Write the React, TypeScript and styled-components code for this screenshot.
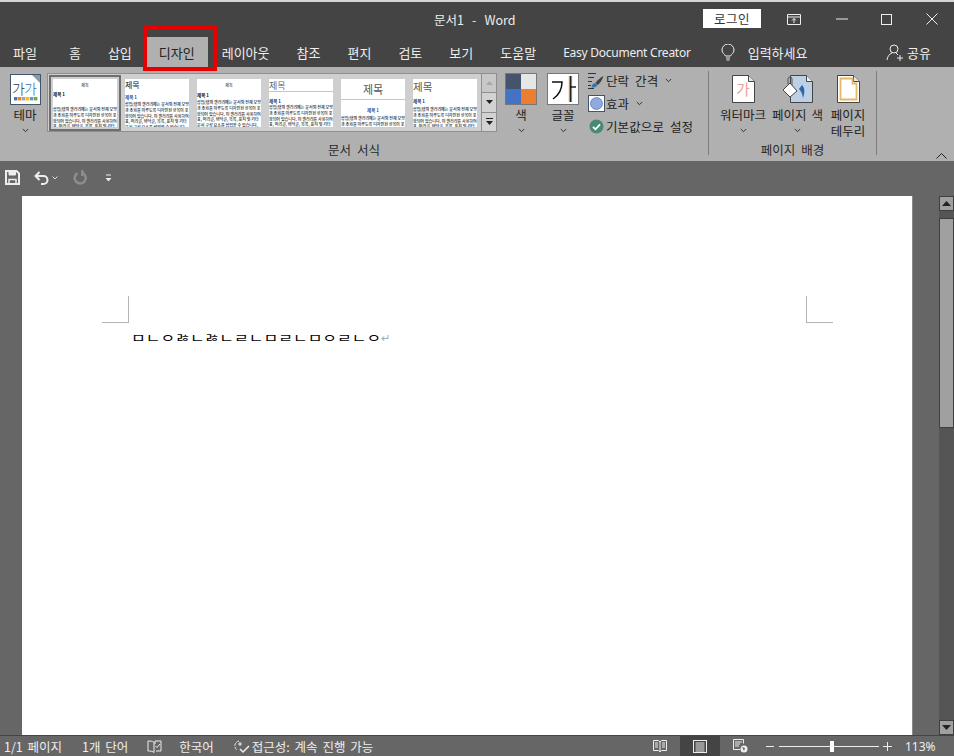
import React from 'react';
import styled, { createGlobalStyle } from 'styled-components';

const GlobalStyle = createGlobalStyle`
  html, body {
    margin: 0;
    padding: 0;
    background: #666;
    overflow: hidden;
  }
  * {
    box-sizing: border-box;
  }
`;

const Window = styled.div`
  position: relative;
  width: 954px;
  height: 756px;
  display: flex;
  flex-direction: column;
  overflow: hidden;
  font-family: 'Noto Sans CJK KR', 'Noto Sans', sans-serif;
  font-size: 12.5px;
  color: #222;
  background: #666;
  border-top: 2px solid #d4d4d4;
`;

const TitleBar = styled.div`
  height: 34px;
  flex: none;
  display: flex;
  align-items: center;
  background: #444;
  color: #eee;
  padding-left: 434px;
`;

const TitleText = styled.div`
  font-size: 12.5px;
  white-space: pre;
  word-spacing: 1.25px;
  font-family: 'Noto Sans CJK KR', 'Noto Sans', sans-serif;
`;

const TitleControls = styled.div`
  margin-left: auto;
  display: flex;
  align-items: center;
`;

const LoginButton = styled.button`
  width: 58px;
  height: 19px;
  margin-top: -1px;
  margin-right: 10px;
  padding: 0;
  border: none;
  background: #fff;
  color: #333;
  font: inherit;
  font-size: 12.5px;
  line-height: 19px;
  letter-spacing: 0.5px;
`;

const WindowButton = styled.div<{ $after?: number }>`
  width: 45px;
  height: 30px;
  margin-right: ${p => p.$after ?? 0}px;
  display: flex;
  align-items: center;
  justify-content: center;
`;

const TabRow = styled.div`
  height: 31px;
  flex: none;
  display: flex;
  align-items: stretch;
  gap: 1px;
  background: #444;
  color: #eee;
  font-size: 13px;
  padding-top: 1px;
`;

const Tab = styled.div<{ $active?: boolean; $first?: boolean }>`
  display: flex;
  align-items: center;
  padding: 0 ${p => (p.$first ? '18px' : '13px')} 0 13px;
  white-space: nowrap;
  background: ${p => (p.$active ? '#b0b0b0' : 'transparent')};
  color: ${p => (p.$active ? '#222' : '#eee')};
`;

const LatinTab = styled(Tab)`
  font-family: 'Noto Sans', sans-serif;
  font-size: 12px;
  letter-spacing: -0.25px;
`;

const Bulb = styled.div`
  display: flex;
  align-items: center;
  margin-left: 16px;
  gap: 13px;
`;

const ShareButton = styled.div`
  margin-left: auto;
  padding-right: 23px;
  display: flex;
  align-items: center;
  gap: 3px;
`;

const Highlight = styled.div`
  position: absolute;
  left: 143px;
  top: 23px;
  width: 74px;
  height: 46px;
  border: 4px solid #e60000;
  pointer-events: none;
`;

const Ribbon = styled.div`
  height: 94px;
  flex: none;
  display: flex;
  background: #b0b0b0;
  padding-top: 4px;
`;

const Group = styled.div<{ $width: number }>`
  width: ${p => p.$width}px;
  height: 84px;
  flex: none;
  display: flex;
  flex-direction: column;
  border-right: 1px solid #7c7c7c;
`;

const GroupBody = styled.div<{ $left: number }>`
  height: 67px;
  flex: none;
  display: flex;
  align-items: flex-start;
  padding: 2px 0 0 ${p => p.$left}px;
`;

const GroupLabel = styled.div`
  height: 17px;
  line-height: 24px;
  text-align: center;
  word-spacing: 3px;
  color: #2a2a2a;
`;

const CollapseSlot = styled.div`
  flex: 1;
  height: 90px;
  display: flex;
  align-items: flex-end;
  justify-content: flex-end;
  padding: 0 7px 2px 0;
`;

const LargeButton = styled.div<{ $width: number; $after?: number }>`
  width: ${p => p.$width}px;
  margin-right: ${p => p.$after ?? 0}px;
  flex: none;
  display: flex;
  flex-direction: column;
  align-items: center;
`;

const IconSlot = styled.div`
  height: 32px;
  display: flex;
  align-items: center;
  justify-content: center;
`;

const ButtonLabel = styled.div`
  margin-top: 2px;
  line-height: 16px;
  text-align: center;
  white-space: nowrap;
  word-spacing: 2px;
`;

const Caret = styled.div`
  height: 14px;
  display: flex;
  align-items: center;
  justify-content: center;
`;

const Gallery = styled.div`
  width: 450px;
  height: 59px;
  flex: none;
  margin: 0 8px 0 5px;
  display: flex;
  background: #cfcfcf;
  border: 1px solid #8f8f8f;
`;

const ThumbStrip = styled.div`
  flex: 1;
  display: flex;
  gap: 8px;
  padding: 5px 0 0 5px;
`;

const Thumb = styled.div<{ $selected?: boolean }>`
  width: 64px;
  height: 48px;
  flex: none;
  overflow: hidden;
  background: #fff;
  color: #111;
  ${p => (p.$selected ? 'outline: 2px solid #6e6e6e; outline-offset: 2px;' : '')}
`;

const ThumbTitle = styled.div<{ $size: number; $center?: boolean; $color?: string; $rule?: boolean; $height: number }>`
  height: ${p => p.$height}px;
  font-size: ${p => p.$size}px;
  line-height: ${p => p.$height}px;
  text-align: ${p => (p.$center ? 'center' : 'left')};
  color: ${p => p.$color ?? '#111'};
  ${p => (p.$rule ? 'border-bottom: 1px solid #b9c8e2;' : '')}
`;

const ThumbHeading = styled.div<{ $center?: boolean; $color?: string; $top: number }>`
  margin-top: ${p => p.$top}px;
  font-size: 4.5px;
  line-height: 7px;
  font-weight: 700;
  text-align: ${p => (p.$center ? 'center' : 'left')};
  color: ${p => p.$color ?? '#111'};
`;

const ThumbBody = styled.div<{ $top: number }>`
  margin-top: ${p => p.$top}px;
  font-size: 4px;
  line-height: 5.8px;
  font-weight: 500;
  color: #111;
`;

const ScrollColumn = styled.div`
  width: 15px;
  flex: none;
  display: flex;
  flex-direction: column;
  border-left: 1px solid #8f8f8f;
`;

const GalleryArrow = styled.div<{ $disabled?: boolean }>`
  flex: 1;
  display: flex;
  align-items: center;
  justify-content: center;
  background: ${p => (p.$disabled ? '#c8c8c8' : '#d2d2d2')};
  & + & {
    border-top: 1px solid #8f8f8f;
  }
`;

const OptionColumn = styled.div`
  margin: -3px 0 0 8px;
  display: flex;
  flex-direction: column;
  gap: 2px;
`;

const OptionRow = styled.div`
  height: 21px;
  display: flex;
  align-items: center;
  gap: 1px;
  white-space: nowrap;
  word-spacing: 3px;
  letter-spacing: 0.1px;
`;

const OptionCaret = styled.span`
  display: flex;
  margin-left: 6px;
`;

const OptionIcon = styled.div`
  width: 18px;
  display: flex;
  justify-content: center;
`;

const QuickAccess = styled.div`
  height: 35px;
  flex: none;
  display: flex;
  align-items: center;
  background: #666;
  padding: 0 0 2px 5px;
  gap: 14px;
`;

const QuickGroup = styled.div<{ $left?: number }>`
  display: flex;
  align-items: center;
  gap: 3px;
  margin-left: ${p => p.$left ?? 0}px;
`;

const Workspace = styled.div`
  flex: 1;
  min-height: 0;
  display: flex;
  background: #666;
`;

const PageArea = styled.div`
  flex: 1;
  padding-left: 22px;
`;

const Page = styled.div`
  width: 891px;
  height: 100%;
  background: #fff;
  border-right: 1px solid #8a8a8a;
  padding: 100px 79px 0 80px;
`;

const MarginMarks = styled.div`
  display: flex;
  justify-content: space-between;
`;

const MarginMark = styled.div<{ $side: 'left' | 'right' }>`
  width: 27px;
  height: 27px;
  border-bottom: 1px solid #b4b4b4;
  ${p => `border-${p.$side === 'left' ? 'right' : 'left'}: 1px solid #b4b4b4;`}
`;

const BodyLine = styled.div`
  display: flex;
  align-items: center;
  height: 20px;
  margin-top: 5px;
  padding-left: 29px;
`;

const JamoText = styled.span`
  display: inline-block;
  font-size: 16px;
  line-height: 20px;
  color: #000;
  white-space: nowrap;
  transform: scaleY(0.78);
`;

const ReturnMark = styled.span`
  font-family: 'DejaVu Sans', sans-serif;
  font-size: 11px;
  color: #a8a8a8;
`;

const ScrollBar = styled.div`
  width: 15px;
  flex: none;
  display: flex;
  flex-direction: column;
  background: #555;
`;

const ScrollArrow = styled.div`
  height: 15px;
  flex: none;
  display: flex;
  align-items: center;
  justify-content: center;
  background: #a0a0a0;
  border: 1px solid #3f3f3f;
`;

const ScrollThumb = styled.div`
  height: 210px;
  margin-top: 7px;
  flex: none;
  background: #a0a0a0;
  border: 1px solid #3f3f3f;
`;

const ScrollSpacer = styled.div`
  flex: 1;
`;

const StatusBar = styled.div`
  height: 21px;
  flex: none;
  display: flex;
  align-items: stretch;
  background: #666;
  border-top: 1px solid #444;
  color: #eee;
  word-spacing: 2px;
  padding-left: 4px;
`;

const StatusItem = styled.div<{ $after: number }>`
  display: flex;
  align-items: center;
  gap: 2px;
  margin-right: ${p => p.$after}px;
  white-space: nowrap;
`;

const StatusRight = styled.div`
  margin-left: auto;
  display: flex;
  align-items: stretch;
  padding-right: 18px;
`;

const ViewButton = styled.div<{ $active?: boolean }>`
  width: 40px;
  display: flex;
  align-items: center;
  justify-content: center;
  background: ${p => (p.$active ? '#444' : 'transparent')};
`;

const ZoomControl = styled.div`
  display: flex;
  align-items: center;
  gap: 4px;
  margin-left: 6px;
`;

const ZoomTrack = styled.div`
  position: relative;
  width: 100px;
  height: 1px;
  background: #eee;
`;

const ZoomThumb = styled.div`
  position: absolute;
  left: 51px;
  top: -5px;
  width: 4px;
  height: 11px;
  background: #fff;
`;

const ZoomValue = styled.div`
  width: 31px;
  margin-left: 13px;
  display: flex;
  align-items: center;
  font-family: 'Noto Sans', sans-serif;
  font-size: 12px;
  word-spacing: 0;
`;

const SmallChevron = () => (
  <svg width="7" height="5" viewBox="0 0 7 5">
    <path d="M.8 1l2.7 2.7L6.2 1" fill="none" stroke="#333" strokeWidth="1" />
  </svg>
);

const PageShape = ({ children }: { children?: React.ReactNode }) => (
  <>
    <path d="M.5.5h16l6 6v21H.5z" fill="#fff" stroke="#444" />
    <path d="M16.5.5v6h6" fill="#e4e4e4" stroke="#444" />
    {children}
  </>
);

const ThemeIcon = () => (
  <svg width="31" height="31" viewBox="0 0 31 31">
    <rect x=".5" y=".5" width="30" height="30" fill="#fff" stroke="#44546a" />
    <path d="M22 1h8v8z" fill="#8a9bb0" />
    <text x="2" y="20" fontSize="14" fontWeight="300" fill="#333" fontFamily="Noto Sans CJK KR">가</text>
    <text x="14" y="20" fontSize="14" fontWeight="300" fill="#3d6fb5" fontFamily="Noto Sans CJK KR">가</text>
    {['#4472c4', '#ed7d31', '#a5a5a5', '#ffc000', '#5b9bd5', '#70ad47'].map((c, i) => (
      <rect key={c} x={4 + i * 4} y="23" width="3.4" height="3.4" fill={c} />
    ))}
  </svg>
);

const ColorSwatch = () => (
  <svg width="32" height="32" viewBox="0 0 32 32">
    <rect width="16" height="16" fill="#44546a" />
    <rect x="16" width="16" height="16" fill="#e7e6e6" />
    <rect y="16" width="16" height="16" fill="#4472c4" />
    <rect x="16" y="16" width="16" height="16" fill="#ed7d31" />
    <rect x=".5" y=".5" width="31" height="31" fill="none" stroke="#777" />
  </svg>
);

const FontSwatch = () => (
  <svg width="32" height="32" viewBox="0 0 32 32">
    <rect x=".5" y=".5" width="31" height="31" fill="#fff" stroke="#777" />
    <path d="M5 9h10c0 8-3 13-9 17" fill="none" stroke="#111" strokeWidth="1.5" />
    <path d="M22.6 3v26" stroke="#e58a26" strokeWidth="1.6" />
    <path d="M23.6 3v26" stroke="#111" strokeWidth="1" />
    <path d="M24.6 3v26" stroke="#2f8fd8" strokeWidth="1" />
    <path d="M23 14h6" stroke="#111" strokeWidth="1.4" />
  </svg>
);

const SpacingIcon = () => (
  <svg width="18" height="18" viewBox="0 0 18 18">
    <path d="M1 1.5h8M1 5.5h6M1 9.5h4M1 13.5h3M1 16.5h6" stroke="#333" strokeWidth="1" />
    <path d="M16.5 4c-3 1.5-6 4-8 7l2.5 2c2.500-2.500 4.500-5.500 5.500-9z" fill="#444" />
    <path d="M8 11c-2 .5-3 2-3.500 4.500 2.500.2 5-.5 6-2.500z" fill="#2e75b6" />
  </svg>
);

const EffectsIcon = () => (
  <svg width="17" height="17" viewBox="0 0 17 17">
    <rect x=".5" y=".5" width="16" height="16" fill="#fff" stroke="#44546a" />
    <circle cx="8.500" cy="8.500" r="6" fill="#8faadc" stroke="#4472c4" strokeWidth=".7" />
  </svg>
);

const DefaultIcon = () => (
  <svg width="15" height="15" viewBox="0 0 15 15">
    <circle cx="7.500" cy="7.500" r="7" fill="#4a8a72" />
    <path d="M4 7.800l2.500 2.500L11 5.300" fill="none" stroke="#fff" strokeWidth="1.800" />
  </svg>
);

const WatermarkIcon = () => (
  <svg width="23" height="28" viewBox="0 0 23 28">
    <PageShape />
    <text x="4" y="20" fontSize="15" fill="#eda39a" fontFamily="Noto Sans CJK KR">가</text>
  </svg>
);

const PageColorIcon = () => (
  <svg width="31" height="28" viewBox="0 0 31 28">
    <path d="M8.500.5h16l6 6v21h-22z" fill="#bdd0e6" stroke="#444" />
    <path d="M24.500.5v6h6" fill="#f0f0f0" stroke="#444" />
    <path d="M20 10c3 3 3 8 1 13-.5-4-2-7-4-9z" fill="#2a6aa6" />
    <path d="M8 8l7 8-7 6-7-7z" fill="#fff" stroke="#444" />
    <path d="M6 9V4a2 2 0 0 1 4 0v6" fill="none" stroke="#555" />
  </svg>
);

const PageBorderIcon = () => (
  <svg width="23" height="28" viewBox="0 0 23 28">
    <PageShape />
    <path d="M3.500 3.500h12v5h4v16h-16z" fill="none" stroke="#e5b868" strokeWidth="1.800" />
  </svg>
);

const App = () => {
  const bodyText =
    '삽입(탭의 갤러리에는 문서의 전체 모양과 조화를 이루도록 디자인된 항목이 포함되어 있습니다. 이 갤러리를 사용하여 표, 머리글, 바닥글, 목록, 표지 및 기타 문서 구성 요소를 삽입할 수 있습니다.';
  const tabs = ['홈', '삽입', '디자인', '레이아웃', '참조', '편지', '검토', '보기', '도움말'];

  return (
    <Window>
      <GlobalStyle />
      <TitleBar>
        <TitleText>문서1  -  Word</TitleText>
        <TitleControls>
          <LoginButton>로그인</LoginButton>
          <WindowButton $after={3}>
            <svg width="14" height="11" viewBox="0 0 14 11">
              <path d="M.5.5h13v10H.5zM.5 3h13" fill="none" stroke="#eee" />
              <path d="M7 9V4.500M5 6.500l2-2 2 2" fill="none" stroke="#eee" />
            </svg>
          </WindowButton>
          <WindowButton>
            <svg width="12" height="2" viewBox="0 0 12 2">
              <path d="M0 1h12" stroke="#eee" />
            </svg>
          </WindowButton>
          <WindowButton>
            <svg width="11" height="11" viewBox="0 0 11 11">
              <rect x=".5" y=".5" width="10" height="10" fill="none" stroke="#eee" />
            </svg>
          </WindowButton>
          <WindowButton>
            <svg width="12" height="12" viewBox="0 0 12 12">
              <path d="M.5.500l11 11M11.500.500l-11 11" stroke="#eee" />
            </svg>
          </WindowButton>
        </TitleControls>
      </TitleBar>

      <TabRow>
        <Tab $first>파일</Tab>
        {tabs.map(t => (
          <Tab key={t} $active={t === '디자인'}>
            {t}
          </Tab>
        ))}
        <LatinTab>Easy Document Creator</LatinTab>
        <Bulb>
          <svg width="14" height="17" viewBox="0 0 14 17">
            <path d="M4.500 12C3.500 10 1 9 1 6a6 6 0 0 1 12 0c0 3-2.500 4-3.500 6z" fill="none" stroke="#eee" />
            <path d="M5 14h4M5.500 16h3" stroke="#eee" />
          </svg>
          입력하세요
        </Bulb>
        <ShareButton>
          <svg width="18" height="17" viewBox="0 0 18 17">
            <circle cx="8" cy="5" r="4" fill="none" stroke="#eee" />
            <path d="M1 16c.5-4 2.500-6 5-7M10 9l2 2" fill="none" stroke="#eee" />
            <path d="M11 14h6M14 11v6" stroke="#eee" />
          </svg>
          공유
        </ShareButton>
      </TabRow>
      <Highlight />

      <Ribbon>
        <Group $width={709}>
          <GroupBody $left={8}>
            <LargeButton $width={34}>
              <IconSlot>
                <ThemeIcon />
              </IconSlot>
              <ButtonLabel>테마</ButtonLabel>
              <Caret>
                <SmallChevron />
              </Caret>
            </LargeButton>
            <Gallery>
              <ThumbStrip>
                <Thumb $selected>
                  <ThumbTitle $size={4} $center $height={12}>
                    제목
                  </ThumbTitle>
                  <ThumbHeading $top={0}>제목 1</ThumbHeading>
                  <ThumbBody $top={9}>{bodyText}</ThumbBody>
                </Thumb>
                <Thumb>
                  <ThumbTitle $size={8} $height={12}>
                    제목
                  </ThumbTitle>
                  <ThumbHeading $top={3} $color="#2f5597">
                    제목 1
                  </ThumbHeading>
                  <ThumbBody $top={1}>{bodyText}</ThumbBody>
                </Thumb>
                <Thumb>
                  <ThumbTitle $size={4} $center $height={12}>
                    제목
                  </ThumbTitle>
                  <ThumbHeading $top={1}>제목 1</ThumbHeading>
                  <ThumbBody $top={1}>{bodyText}</ThumbBody>
                </Thumb>
                <Thumb>
                  <ThumbTitle $size={9} $color="#666" $rule $height={13}>
                    제목
                  </ThumbTitle>
                  <ThumbHeading $top={6} $color="#1f3864">
                    제목 1
                  </ThumbHeading>
                  <ThumbBody $top={0}>{bodyText}</ThumbBody>
                </Thumb>
                <Thumb>
                  <ThumbTitle $size={11} $center $color="#555" $rule $height={21}>
                    제목
                  </ThumbTitle>
                  <ThumbHeading $top={7} $center $color="#2f5597">
                    제목 1
                  </ThumbHeading>
                  <ThumbBody $top={2}>{bodyText}</ThumbBody>
                </Thumb>
                <Thumb>
                  <ThumbTitle $size={10.5} $color="#555" $height={15}>
                    제목
                  </ThumbTitle>
                  <ThumbHeading $top={4} $color="#1f3864">
                    제목 1
                  </ThumbHeading>
                  <ThumbBody $top={2}>{bodyText}</ThumbBody>
                </Thumb>
              </ThumbStrip>
              <ScrollColumn>
                <GalleryArrow $disabled>
                  <svg width="7" height="4" viewBox="0 0 7 4">
                    <path d="M0 4l3.500-4L7 4z" fill="#a8a8a8" />
                  </svg>
                </GalleryArrow>
                <GalleryArrow>
                  <svg width="7" height="4" viewBox="0 0 7 4">
                    <path d="M0 0l3.500 4L7 0z" fill="#222" />
                  </svg>
                </GalleryArrow>
                <GalleryArrow>
                  <svg width="7" height="7" viewBox="0 0 7 7">
                    <path d="M0 .5h7" stroke="#222" />
                    <path d="M0 3l3.500 4L7 3z" fill="#222" />
                  </svg>
                </GalleryArrow>
              </ScrollColumn>
            </Gallery>
            <LargeButton $width={32} $after={10}>
              <IconSlot>
                <ColorSwatch />
              </IconSlot>
              <ButtonLabel>색</ButtonLabel>
              <Caret>
                <SmallChevron />
              </Caret>
            </LargeButton>
            <LargeButton $width={32}>
              <IconSlot>
                <FontSwatch />
              </IconSlot>
              <ButtonLabel>글꼴</ButtonLabel>
              <Caret>
                <SmallChevron />
              </Caret>
            </LargeButton>
            <OptionColumn>
              <OptionRow>
                <OptionIcon>
                  <SpacingIcon />
                </OptionIcon>
                단락 간격
                <OptionCaret>
                  <SmallChevron />
                </OptionCaret>
              </OptionRow>
              <OptionRow>
                <OptionIcon>
                  <EffectsIcon />
                </OptionIcon>
                효과
                <OptionCaret>
                  <SmallChevron />
                </OptionCaret>
              </OptionRow>
              <OptionRow>
                <OptionIcon>
                  <DefaultIcon />
                </OptionIcon>
                기본값으로 설정
              </OptionRow>
            </OptionColumn>
          </GroupBody>
          <GroupLabel>문서 서식</GroupLabel>
        </Group>

        <Group $width={168}>
          <GroupBody $left={11}>
            <LargeButton $width={46} $after={6}>
              <IconSlot>
                <WatermarkIcon />
              </IconSlot>
              <ButtonLabel>워터마크</ButtonLabel>
              <Caret>
                <SmallChevron />
              </Caret>
            </LargeButton>
            <LargeButton $width={51} $after={7}>
              <IconSlot>
                <PageColorIcon />
              </IconSlot>
              <ButtonLabel>페이지 색</ButtonLabel>
              <Caret>
                <SmallChevron />
              </Caret>
            </LargeButton>
            <LargeButton $width={36}>
              <IconSlot>
                <PageBorderIcon />
              </IconSlot>
              <ButtonLabel>
                페이지
                <br />
                테두리
              </ButtonLabel>
            </LargeButton>
          </GroupBody>
          <GroupLabel>페이지 배경</GroupLabel>
        </Group>

        <CollapseSlot>
          <svg width="11" height="6" viewBox="0 0 11 6">
            <path d="M.5 5.500l5-5 5 5" fill="none" stroke="#222" />
          </svg>
        </CollapseSlot>
      </Ribbon>

      <QuickAccess>
        <svg width="15" height="15" viewBox="0 0 15 15">
          <path d="M1 1h10.500L14 3.500V14H1z" fill="none" stroke="#eee" strokeWidth="2" />
          <path d="M4 1v4h6.500V1" fill="#eee" stroke="#eee" />
          <path d="M4 14V9.500h7V14" fill="none" stroke="#eee" strokeWidth="1.500" />
        </svg>
        <QuickGroup>
          <svg width="15" height="14" viewBox="0 0 15 14">
            <path d="M5.500 1L1.500 5l4 4" fill="none" stroke="#eee" strokeWidth="2" />
            <path d="M2 5h7.500a4 4 0 0 1 0 8H7" fill="none" stroke="#eee" strokeWidth="2" />
          </svg>
          <svg width="6" height="4" viewBox="0 0 6 4">
            <path d="M.5.500L3 3 5.500.500" fill="none" stroke="#ddd" />
          </svg>
        </QuickGroup>
        <svg width="15" height="15" viewBox="0 0 15 15">
          <path d="M5.500 3.200a5.500 5.500 0 1 0 5-.2" fill="none" stroke="#8c8c8c" strokeWidth="2.500" />
          <path d="M9 0h2.500v6H9z" fill="#8c8c8c" />
        </svg>
        <QuickGroup $left={4}>
          <svg width="7" height="8" viewBox="0 0 7 8">
            <path d="M1 1h5" stroke="#eee" />
            <path d="M.5 4h6L3.500 7.500z" fill="#eee" />
          </svg>
        </QuickGroup>
      </QuickAccess>

      <Workspace>
        <PageArea>
          <Page>
            <MarginMarks>
              <MarginMark $side="left" />
              <MarginMark $side="right" />
            </MarginMarks>
            <BodyLine>
              <JamoText>ㅁㄴㅇㅀㄴㅀㄴㄹㄴㅁㄹㄴㅁㅇㄹㄴㅇ</JamoText>
              <ReturnMark>↵</ReturnMark>
            </BodyLine>
          </Page>
        </PageArea>
        <ScrollBar>
          <ScrollArrow>
            <svg width="9" height="5" viewBox="0 0 9 5">
              <path d="M0 5l4.500-5L9 5z" fill="#222" />
            </svg>
          </ScrollArrow>
          <ScrollThumb />
          <ScrollSpacer />
          <ScrollArrow>
            <svg width="9" height="5" viewBox="0 0 9 5">
              <path d="M0 0l4.500 5L9 0z" fill="#222" />
            </svg>
          </ScrollArrow>
        </ScrollBar>
      </Workspace>

      <StatusBar>
        <StatusItem $after={20}>1/1 페이지</StatusItem>
        <StatusItem $after={19}>1개 단어</StatusItem>
        <StatusItem $after={17}>
          <svg width="15" height="13" viewBox="0 0 15 13">
            <path d="M7 2.500C5.500 1 3 1 1 1v10c2 0 4.500 0 6 1.500V2.500z" fill="none" stroke="#eee" />
            <path d="M8 4V1h6v10H9" fill="none" stroke="#eee" />
            <path d="M8.500 6l1.500 1.500L13 4" fill="none" stroke="#eee" />
          </svg>
        </StatusItem>
        <StatusItem $after={19}>한국어</StatusItem>
        <StatusItem $after={0}>
          <svg width="17" height="15" viewBox="0 0 17 15">
            <path d="M6 2a5 5 0 0 0-2 9" fill="none" stroke="#eee" strokeDasharray="3 1" />
            <path d="M7 3v4M5 5h4" stroke="#eee" />
            <path d="M7 10l3 3 6-6" fill="none" stroke="#eee" strokeWidth="1.500" />
          </svg>
          접근성: 계속 진행 가능
        </StatusItem>
        <StatusRight>
          <ViewButton>
            <svg width="14" height="14" viewBox="0 0 14 14">
              <path d="M.5 1.500h5L7 3l1.500-1.500h5v10h-5L7 13l-1.500-1.500h-5z" fill="none" stroke="#eee" />
              <path d="M2 4h3M2 6h3M2 8h3M9 4h3M9 6h3M9 8h3M7 3v10" stroke="#eee" />
            </svg>
          </ViewButton>
          <ViewButton $active>
            <svg width="14" height="13" viewBox="0 0 14 13">
              <rect x=".5" y=".5" width="13" height="12" fill="none" stroke="#eee" />
              <path d="M2.500 3h9M2.500 5h9M2.500 7h9M2.500 9h9M2.500 11h9" stroke="#eee" />
            </svg>
          </ViewButton>
          <ViewButton>
            <svg width="15" height="14" viewBox="0 0 15 14">
              <path d="M7 10.500H.5V.5h10v4" fill="none" stroke="#eee" />
              <path d="M2 3h7M2 5h5M2 7h4" stroke="#eee" />
              <circle cx="11" cy="10" r="3.500" fill="#eee" />
              <path d="M9 8l3 1-1 3z" fill="#666" />
            </svg>
          </ViewButton>
          <ZoomControl>
            <svg width="9" height="9" viewBox="0 0 9 9">
              <path d="M0 4.500h8" stroke="#eee" />
            </svg>
            <ZoomTrack>
              <ZoomThumb />
            </ZoomTrack>
            <svg width="9" height="9" viewBox="0 0 9 9">
              <path d="M0 4.500h9M4.500 0v9" stroke="#eee" />
            </svg>
          </ZoomControl>
          <ZoomValue>113%</ZoomValue>
        </StatusRight>
      </StatusBar>
    </Window>
  );
};

export default App;
